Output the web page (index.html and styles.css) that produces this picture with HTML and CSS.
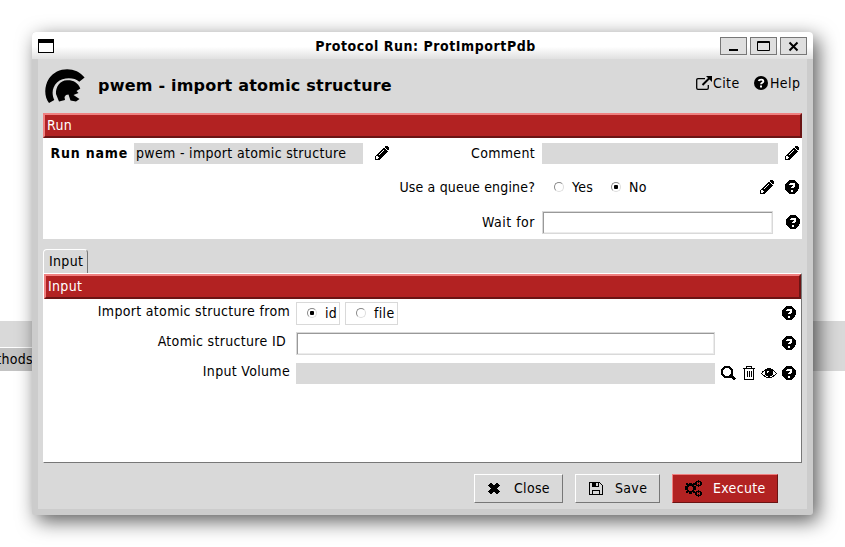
FILE: index.html
```html
<!DOCTYPE html>
<html lang="en">
<head>
<meta charset="utf-8">
<title>Protocol Run: ProtImportPdb</title>
<link rel="stylesheet" href="styles.css">
</head>
<body>
<svg class="defs" width="0" height="0">
  <symbol id="pencil" viewBox="0 0 14 14"><path fill-rule="evenodd" d="M0 14V10L8.500 1.500L12.500 5.500L4 14ZM1.200 10.800V12.800H3.200L4 12L2 10ZM4 8.800L8.500 4.300L9 4.800L4.500 9.300ZM9.400 .8L10.200 0H12L14 2V3.800L13.200 4.600Z"/></symbol>
  <symbol id="help" viewBox="0 0 14 14"><circle cx="7" cy="7" r="7"/><path d="M4.700 5C5 3.300 9.400 3.100 9.400 5.200C9.400 6.700 7 6.800 7 8.300" fill="none" stroke="#fff" stroke-width="1.800"/><path fill="#fff" d="M6 9.600H8V11.500H6Z"/></symbol>
</svg>
<div class="desk"><span>thods</span></div>
<main class="window">
  <header class="titlebar">
    <i class="appicon"></i>
    <b>Protocol Run: ProtImportPdb</b>
    <div class="controls">
      <button><svg width="25" height="16"><path d="M8 11H17V13H8Z"/></svg></button>
      <button><svg width="25" height="16"><path fill="none" stroke="#000" d="M6.500 3.500H18.500V12.500H6.500ZM6 4.500H19"/></svg></button>
      <button><svg width="25" height="16"><path fill="none" stroke="#000" stroke-width="2" d="M8.500 4.500L16.500 12.500M16.500 4.500L8.500 12.500"/></svg></button>
    </div>
  </header>
  <div class="content">
    <section class="heading">
      <svg class="logo" width="40" height="35" viewBox="0 0 40 35"><path d="M4 34C-1 28-1 17 4 9.500C12-2.500 31-3 39.600 8.600L34.300 12.700C29 8 18 8 12 13.500C7 18.500 6.500 25 9.300 31Z"/><path d="M11 25C10.500 18 15 11.500 22 11.300C28 11 33 13.500 35.300 19.500L31.500 22L33.500 24L28.500 26L34.500 30L31 32.500L25.500 31.500L23.500 25.500L21 26L19.500 28L20 31L14 32.500Z"/></svg>
      <h1>pwem - import atomic structure</h1>
      <a class="cite"><svg width="16" height="14" viewBox="0 0 16 14"><path fill="none" stroke="#000" stroke-width="1.300" d="M9 2.600H2Q.7 2.600 .7 4V12Q.7 13.300 2 13.300H11Q12.300 13.300 12.300 12V9"/><path fill="none" stroke="#000" stroke-width="2" d="M6.500 9L14 1.500"/><path d="M10 0H16V6Z"/></svg>Cite</a>
      <a class="helplink"><svg width="14" height="14"><use href="#help"/></svg>Help</a>
    </section>

    <section class="run">
      <h2 class="bar">Run</h2>
      <div class="row first">
        <b class="label">Run name</b><div class="field name">pwem - import atomic structure</div>
        <svg class="crisp" width="14" height="14"><use href="#pencil"/></svg>
        <span class="label comment">Comment</span><div class="field note"></div>
        <svg class="crisp" width="14" height="14"><use href="#pencil"/></svg>
      </div>
      <div class="row second">
        <span class="label queue">Use a queue engine?</span>
        <label class="yes"><i class="radio"></i>Yes</label><label class="no"><i class="radio on"></i>No</label>
        <svg class="crisp edit" width="14" height="14"><use href="#pencil"/></svg>
        <svg class="crisp" width="14" height="14"><use href="#help"/></svg>
      </div>
      <div class="row third">
        <span class="label wait">Wait for</span><div class="entry"></div>
        <svg class="crisp" width="14" height="14"><use href="#help"/></svg>
      </div>
    </section>

    <div class="tab">Input</div>
    <section class="page">
      <h2 class="bar">Input</h2>
      <div class="param">
        <span class="label">Import atomic structure from</span>
        <div class="choices"><label class="box"><i class="radio on"></i>id</label><label class="box file"><i class="radio"></i>file</label></div>
        <div class="tools"><svg class="crisp" width="14" height="14"><use href="#help"/></svg></div>
      </div>
      <div class="param">
        <span class="label id">Atomic structure ID</span><div class="entry"></div>
        <div class="tools"><svg class="crisp" width="14" height="14"><use href="#help"/></svg></div>
      </div>
      <div class="param">
        <span class="label">Input Volume</span><div class="field"></div>
        <div class="tools">
          <svg class="crisp" width="15" height="14"><circle cx="6" cy="6" r="5" fill="none" stroke="#000" stroke-width="2.200"/><path stroke="#000" stroke-width="3" d="M10 10L14 13.500"/></svg>
          <svg class="crisp trash" width="12" height="14"><path fill="none" stroke="#000" d="M0 2.500H12M3.500 2V.5H8.500V2M1.500 3V13.500H10.500V3M4.500 5V11M6.500 5V11M8.500 5V11"/></svg>
          <svg class="crisp eye" width="16" height="11"><path fill="none" stroke="#000" stroke-width="1.200" d="M.5 5.500Q8-3.800 15.500 5.500Q8 14 .5 5.500Z"/><circle cx="8" cy="4.800" r="3.900"/><path fill="none" stroke="#fff" d="M6.500 5V3.500H8"/></svg>
          <svg class="crisp" width="14" height="14"><use href="#help"/></svg>
        </div>
      </div>
    </section>

    <footer class="actions">
      <button class="btn close"><svg class="crisp" width="12" height="11"><path stroke="#000" stroke-width="3.600" d="M1.500 1L10.500 10M10.500 1L1.500 10"/></svg><span>Close</span></button>
      <button class="btn save"><svg class="crisp" width="14" height="13"><path fill="none" stroke="#000" d="M.5 .5H10.500L13.500 3.500V12.500H.5ZM3.500 12V8.500H10.500V12M3.500 1V4.500H9.500V1"/><path d="M4 1H7V4H4Z"/></svg><span>Save</span></button>
      <button class="btn execute"><svg class="crisp" width="17" height="17"><path fill-rule="evenodd" d="M4 3H7V4H8V3H10V5H9V6H11V10H9V11H10V13H8V12H7V14H4V12H3V13H1V11H2V10H0V6H2V5H1V3H3V4H4ZM4 6V7H3V10H4V11H7V10H8V7H7V6Z"/><path fill-rule="evenodd" d="M11 1H13V0H14V1H16V2H17V5H16V6H14V7H13V6H11V5H10V2H11ZM12 2V5H13V4H14V5H15V2H14V3H13V2Z"/><path fill-rule="evenodd" d="M11 11H13V10H14V11H16V12H17V15H16V16H14V17H13V16H11V15H10V12H11ZM12 12V15H13V14H14V15H15V12H14V13H13V12Z"/></svg><span>Execute</span></button>
    </footer>
  </div>
</main>
</body>
</html>
```
FILE: styles.css
```css
* { box-sizing: border-box; }
body {
  margin: 0; width: 845px; height: 547px; overflow: hidden; background: #fff; color: #000;
  font: 14px/20px "DejaVu Sans Condensed", "DejaVu Sans", sans-serif; font-stretch: condensed;
  position: relative; padding: 32px; white-space: nowrap; letter-spacing: .32px;
}
svg { display: block; flex: none; }
.defs { position: absolute; }
.crisp { shape-rendering: crispEdges; }
h1, h2 { margin: 0; }
button { font: inherit; letter-spacing: inherit; margin: 0; padding: 0; color: #000; }
.desk { position: absolute; left: 0; right: 0; top: 321px; height: 50px; background: #d9d9d9; padding-top: 26px; }
.desk span { display: block; width: 100px; height: 24px; margin-left: -67px; padding-top: 1px; border-top: 1px solid #fff; background: #c3c3c3; text-align: right; }
.window {
  position: relative; width: 781px; height: 483px; border-radius: 4px 4px 3px 3px; background: #ccc;
  box-shadow: 5px 6px 20px rgba(0,0,0,.65);
}
.titlebar { height: 27px; display: flex; align-items: center; padding: 0 6px; border-radius: 4px 4px 0 0; background: linear-gradient(#fff 55%, #e0e0e0); }
.titlebar b { flex: 1; text-align: center; padding-left: 77px; letter-spacing: .55px; }
.appicon { width: 16px; height: 14px; border: 1px solid #000; border-top-width: 4px; background: #fff; }
.controls { display: flex; gap: 3px; }
.controls button { width: 27px; height: 18px; border: 1px solid #777; background: #dfdfdf; }
.content { margin: 0 6px; height: 450px; background: #d9d9d9; padding: 0 5px; }
.heading { height: 54px; display: flex; align-items: center; padding-left: 2px; }
.heading h1 { font: bold 16px/20px "DejaVu Sans", sans-serif; font-stretch: normal; letter-spacing: .21px; flex: none; width: 611px; padding-left: 13px; }
.heading a { display: flex; flex: none; align-items: center; position: relative; top: -3px; letter-spacing: .4px; }
.cite { width: 58px; }
.cite svg { margin-right: 1px; }
.helplink svg { margin-right: 2px; }
.bar { height: 25px; padding: 0 0 1px 2px; font: inherit; line-height: 20px; color: #fff; background: #b22222; border: 2px solid; border-color: #f08080 #6b1414 #6b1414 #f08080; }
.run { height: 126px; background: #fff; }
.row { display: flex; align-items: center; }
.label { text-align: right; }
.first { height: 21px; margin-top: 5px; }
.first svg { margin-bottom: 1px; }
.first b { width: 85px; margin: 0 6px 1px 0; letter-spacing: .78px; }
.field { height: 21px; background: #d9d9d9; padding-left: 2px; }
.name { width: 229px; margin-right: 12px; }
.comment { width: 146px; margin: 0 7px 1px 0; }
.note { width: 236px; margin-right: 7px; }
.second { height: 20px; margin-top: 13px; }
.queue, .wait { width: 492px; letter-spacing: .17px; }
.wait { letter-spacing: .5px; margin-bottom: 1px; }
.yes, .no { display: flex; align-items: center; }
.radio { width: 10px; height: 10px; border: 1px solid; border-color: #888 #ddd #ddd #888; border-radius: 50%; flex: none; margin-right: 8px; position: relative; }
.radio.on::after { content: ""; position: absolute; left: 2px; top: 2px; width: 4px; height: 4px; border-radius: 1px; background: #000; }
.yes { margin-left: 19px; width: 57px; }
.no { width: 149px; }
.edit { margin-right: 11px; }
.third { height: 23px; margin-top: 14px; }
.third svg { margin-bottom: 1px; }
.entry { height: 23px; background: #fff; border: 1px solid #d9d9d9; box-shadow: inset 1px 1px #999, inset -1px -1px #ececec; }
.third .entry { width: 231px; margin: 0 13px 0 7px; }
.tab { width: 45px; height: 24px; margin-top: 10px; padding: 1px 0 0 5px; border: 1px solid; border-color: #fff #777 transparent #fff; border-bottom: 0; border-radius: 4px 4px 0 0; }
.page { height: 190px; background: #fff; border: 1px solid; border-color: #fff #777 #777 #fff; }
.param { display: grid; grid-template-columns: 246px 419px 1fr; column-gap: 6px; height: 30px; }
.page .bar + .param { margin-top: 2px; }
.param .entry { margin-top: 1px; }
.param .field { margin-top: 2px; }
.param .id { padding-right: 4px; }
.choices { display: flex; gap: 5px; margin-top: 1px; }
.box { display: flex; align-items: center; width: 44px; height: 23px; border: 1px solid #d9d9d9; padding: 0 0 1px 10px; }
.file { width: 53px; }
.tools { display: flex; justify-content: flex-end; align-items: center; height: 24px; padding-right: 5px; }
.trash { margin: 0 6px 0 7px; }
.eye { margin-right: 5px; }
.actions { display: flex; gap: 12px; margin: 11px 0 0 431px; }
.btn { display: flex; align-items: center; height: 29px; border: 1px solid; border-color: #fff #777 #777 #fff; background: #d9d9d9; }
.btn span { margin-bottom: 1px; }
.close { width: 89px; padding-left: 13px; gap: 14px; }
.save { width: 85px; padding-left: 13px; gap: 12px; }
.execute { width: 106px; padding-left: 12px; gap: 11px; color: #fff; background: #b22222; border-color: #f08080 #6b1414 #6b1414 #f08080; }
```
